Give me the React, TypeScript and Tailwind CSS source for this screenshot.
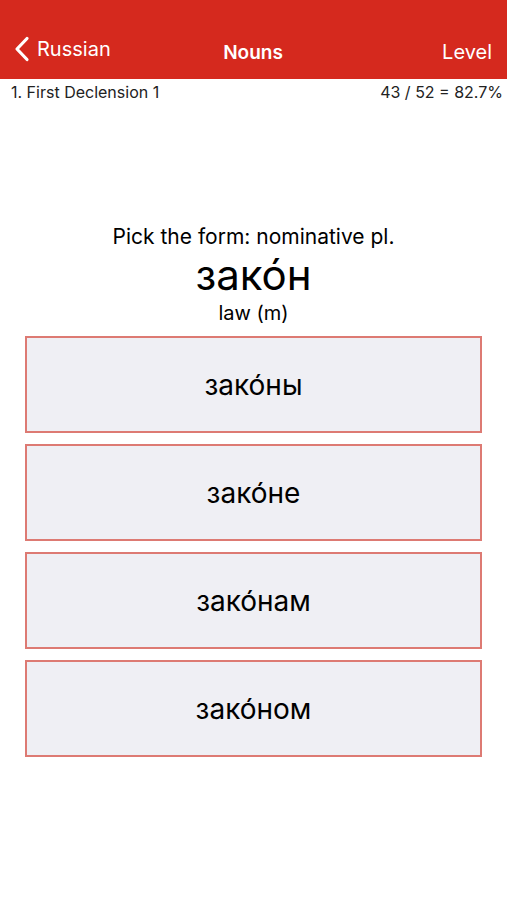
import React from 'react';

const OPTIONS = ['зако́ны', 'зако́не', 'зако́нам', 'зако́ном'];

export default function App() {
  return (
    <div className="min-h-screen bg-white text-black" style={{ fontFamily: 'Inter, "Noto Sans", sans-serif' }}>
      {/* Nav bar */}
      <header className="bg-[#d5291e] h-[79px] flex items-end pl-[14px] pr-3 pb-[17px] text-white">
        <div className="flex-1 flex items-center gap-[7px]">
          <svg width="16" height="26" viewBox="0 0 16 26" fill="none">
            <path d="M13 2.5 L3 13 L13 23.5" stroke="white" strokeWidth="3.2" strokeLinecap="round" strokeLinejoin="round" />
          </svg>
          <span className="text-[20px] leading-none">Russian</span>
        </div>
        <div className="text-[19px] font-semibold leading-none">Nouns</div>
        <div className="flex-1 text-right text-[20px] leading-none pr-[3px]">Level</div>
      </header>

      {/* Level row */}
      <div className="flex justify-between items-center pl-[11px] pr-[4px] h-[26px] text-[16px] text-[#222]">
        <span>1. First Declension 1</span>
        <span>43 / 52 = 82.7%</span>
      </div>

      {/* Prompt */}
      <div className="flex flex-col items-center mt-[120px]">
        <p className="text-[21px] leading-[24px]">Pick the form: nominative pl.</p>
        <p className="text-[42px] leading-[44px] mt-[4px]">зако́н</p>
        <p className="text-[20px] leading-[24px] mt-[4px]">law (m)</p>
      </div>

      {/* Options */}
      <div className="flex flex-col gap-[11px] px-[25px] mt-[11px]">
        {OPTIONS.map(opt => (
          <button
            key={opt}
            className="h-[97px] w-full bg-[#efeff4] border-2 border-[#dd7a73] flex items-center justify-center text-[28px]"
          >
            {opt}
          </button>
        ))}
      </div>
    </div>
  );
}
